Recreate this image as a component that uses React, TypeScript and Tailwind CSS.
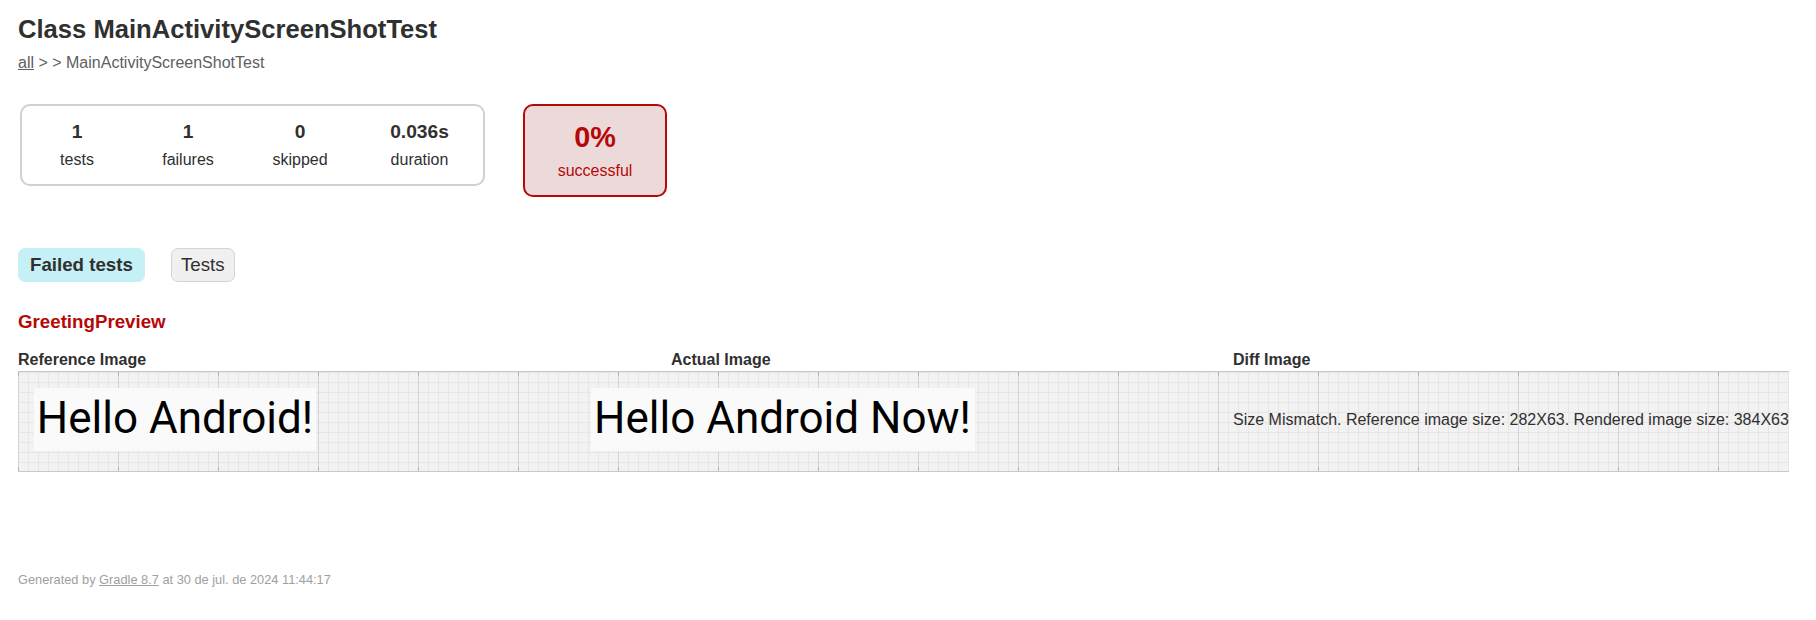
const STATS = [
  { value: '1', label: 'tests', width: 'w-[110px]' },
  { value: '1', label: 'failures', width: 'w-[112px]' },
  { value: '0', label: 'skipped', width: 'w-[112px]' },
  { value: '0.036s', label: 'duration', width: 'w-[127px]' },
];

// preview background: light grid with darker line every 100px and small ticks on the edges
const GRID =
  'bg-[#f2f2f2] [background-image:linear-gradient(to_right,#b4b4b4_1px,transparent_1px),linear-gradient(to_right,#b4b4b4_1px,transparent_1px),linear-gradient(to_right,#d4d4d4_1px,transparent_1px),linear-gradient(to_right,#e6e6e6_1px,transparent_1px),linear-gradient(to_bottom,#e6e6e6_1px,transparent_1px)] [background-size:100px_4px,100px_4px,100px_100%,10px_10px,10px_10px] [background-repeat:repeat-x,repeat-x,repeat,repeat,repeat] [background-position:0_0,0_100%,0_0,0_0,0_0]';

function PreviewImage({ text, width }: { text: string; width: string }) {
  return (
    <div
      className={`${width} flex h-[63px] justify-center whitespace-nowrap bg-[#fafafa] font-['Roboto',sans-serif] text-[44px] leading-[60px] text-black`}
    >
      {text}
    </div>
  );
}

export default function App() {
  return (
    <div className="px-[18px] font-['Liberation_Sans',Arial,sans-serif] text-[#303030]">
      {/* Header */}
      <h1 className="whitespace-nowrap pt-[15px] text-[25.6px] font-bold leading-[29px]">
        Class MainActivityScreenShotTest
      </h1>
      <div className="mt-[10px] text-base leading-[18px] text-[#606060]">
        <a className="underline">all</a> &gt; &gt; MainActivityScreenShotTest
      </div>

      {/* Summary */}
      <div className="mt-[32px] flex items-start">
        <div className="ml-[2px] flex rounded-[10px] border-2 border-[#d0d0d0]">
          {STATS.map(s => (
            <div key={s.label} className={`${s.width} py-[15px] text-center`}>
              <div className="mb-[8px] text-[19.2px] font-bold leading-[22px]">{s.value}</div>
              <p className="text-base leading-[18px]">{s.label}</p>
            </div>
          ))}
        </div>
        <div className="ml-[38px] w-[144px] rounded-[10px] border-2 border-[#b60808] bg-[#ecdada] py-[15px] text-center text-[#b60808]">
          <div className="mb-[8px] text-[28.8px] font-bold leading-[33px]">0%</div>
          <p className="text-base leading-[18px]">successful</p>
        </div>
      </div>

      {/* Tabs */}
      <div className="mt-[51px] flex">
        <div className="mr-[26px] rounded-[7px] border border-[#c5f0f5] bg-[#c5f0f5] px-[11px] py-[5px] text-[18.72px] font-bold leading-[22px]">
          Failed tests
        </div>
        <div className="rounded-[7px] border border-[#d4d4d4] bg-[#f0f0f0] px-[9px] py-[5px] text-[18.72px] leading-[22px]">
          Tests
        </div>
      </div>

      {/* Failed test */}
      <h3 className="mt-[29px] whitespace-nowrap text-[18.72px] font-bold leading-[22px] text-[#b60808]">
        GreetingPreview
      </h3>

      <div className="mt-[18px] flex whitespace-nowrap text-base font-bold leading-[18px]">
        <div className="w-[653px]">Reference Image</div>
        <div className="w-[562px]">Actual Image</div>
        <div>Diff Image</div>
      </div>

      <div className={`mt-[2px] flex h-[101px] w-max border-y border-[#c8c8c8] ${GRID}`}>
        <div className="flex w-[314px] justify-center pt-[16px]">
          <PreviewImage text="Hello Android!" width="w-[282px]" />
        </div>
        <div className="flex w-[901px] justify-center pt-[16px]">
          <PreviewImage text="Hello Android Now!" width="w-[384px]" />
        </div>
        <div className="whitespace-nowrap pt-[39px] text-base leading-[18px]">
          Size Mismatch. Reference image size: 282X63. Rendered image size: 384X63
        </div>
      </div>

      {/* Footer */}
      <div className="mt-[100px] whitespace-nowrap text-[12.8px] leading-[15px] text-[#a0a0a0]">
        Generated by <a className="underline">Gradle 8.7</a> at 30 de jul. de 2024 11:44:17
      </div>
    </div>
  );
}
